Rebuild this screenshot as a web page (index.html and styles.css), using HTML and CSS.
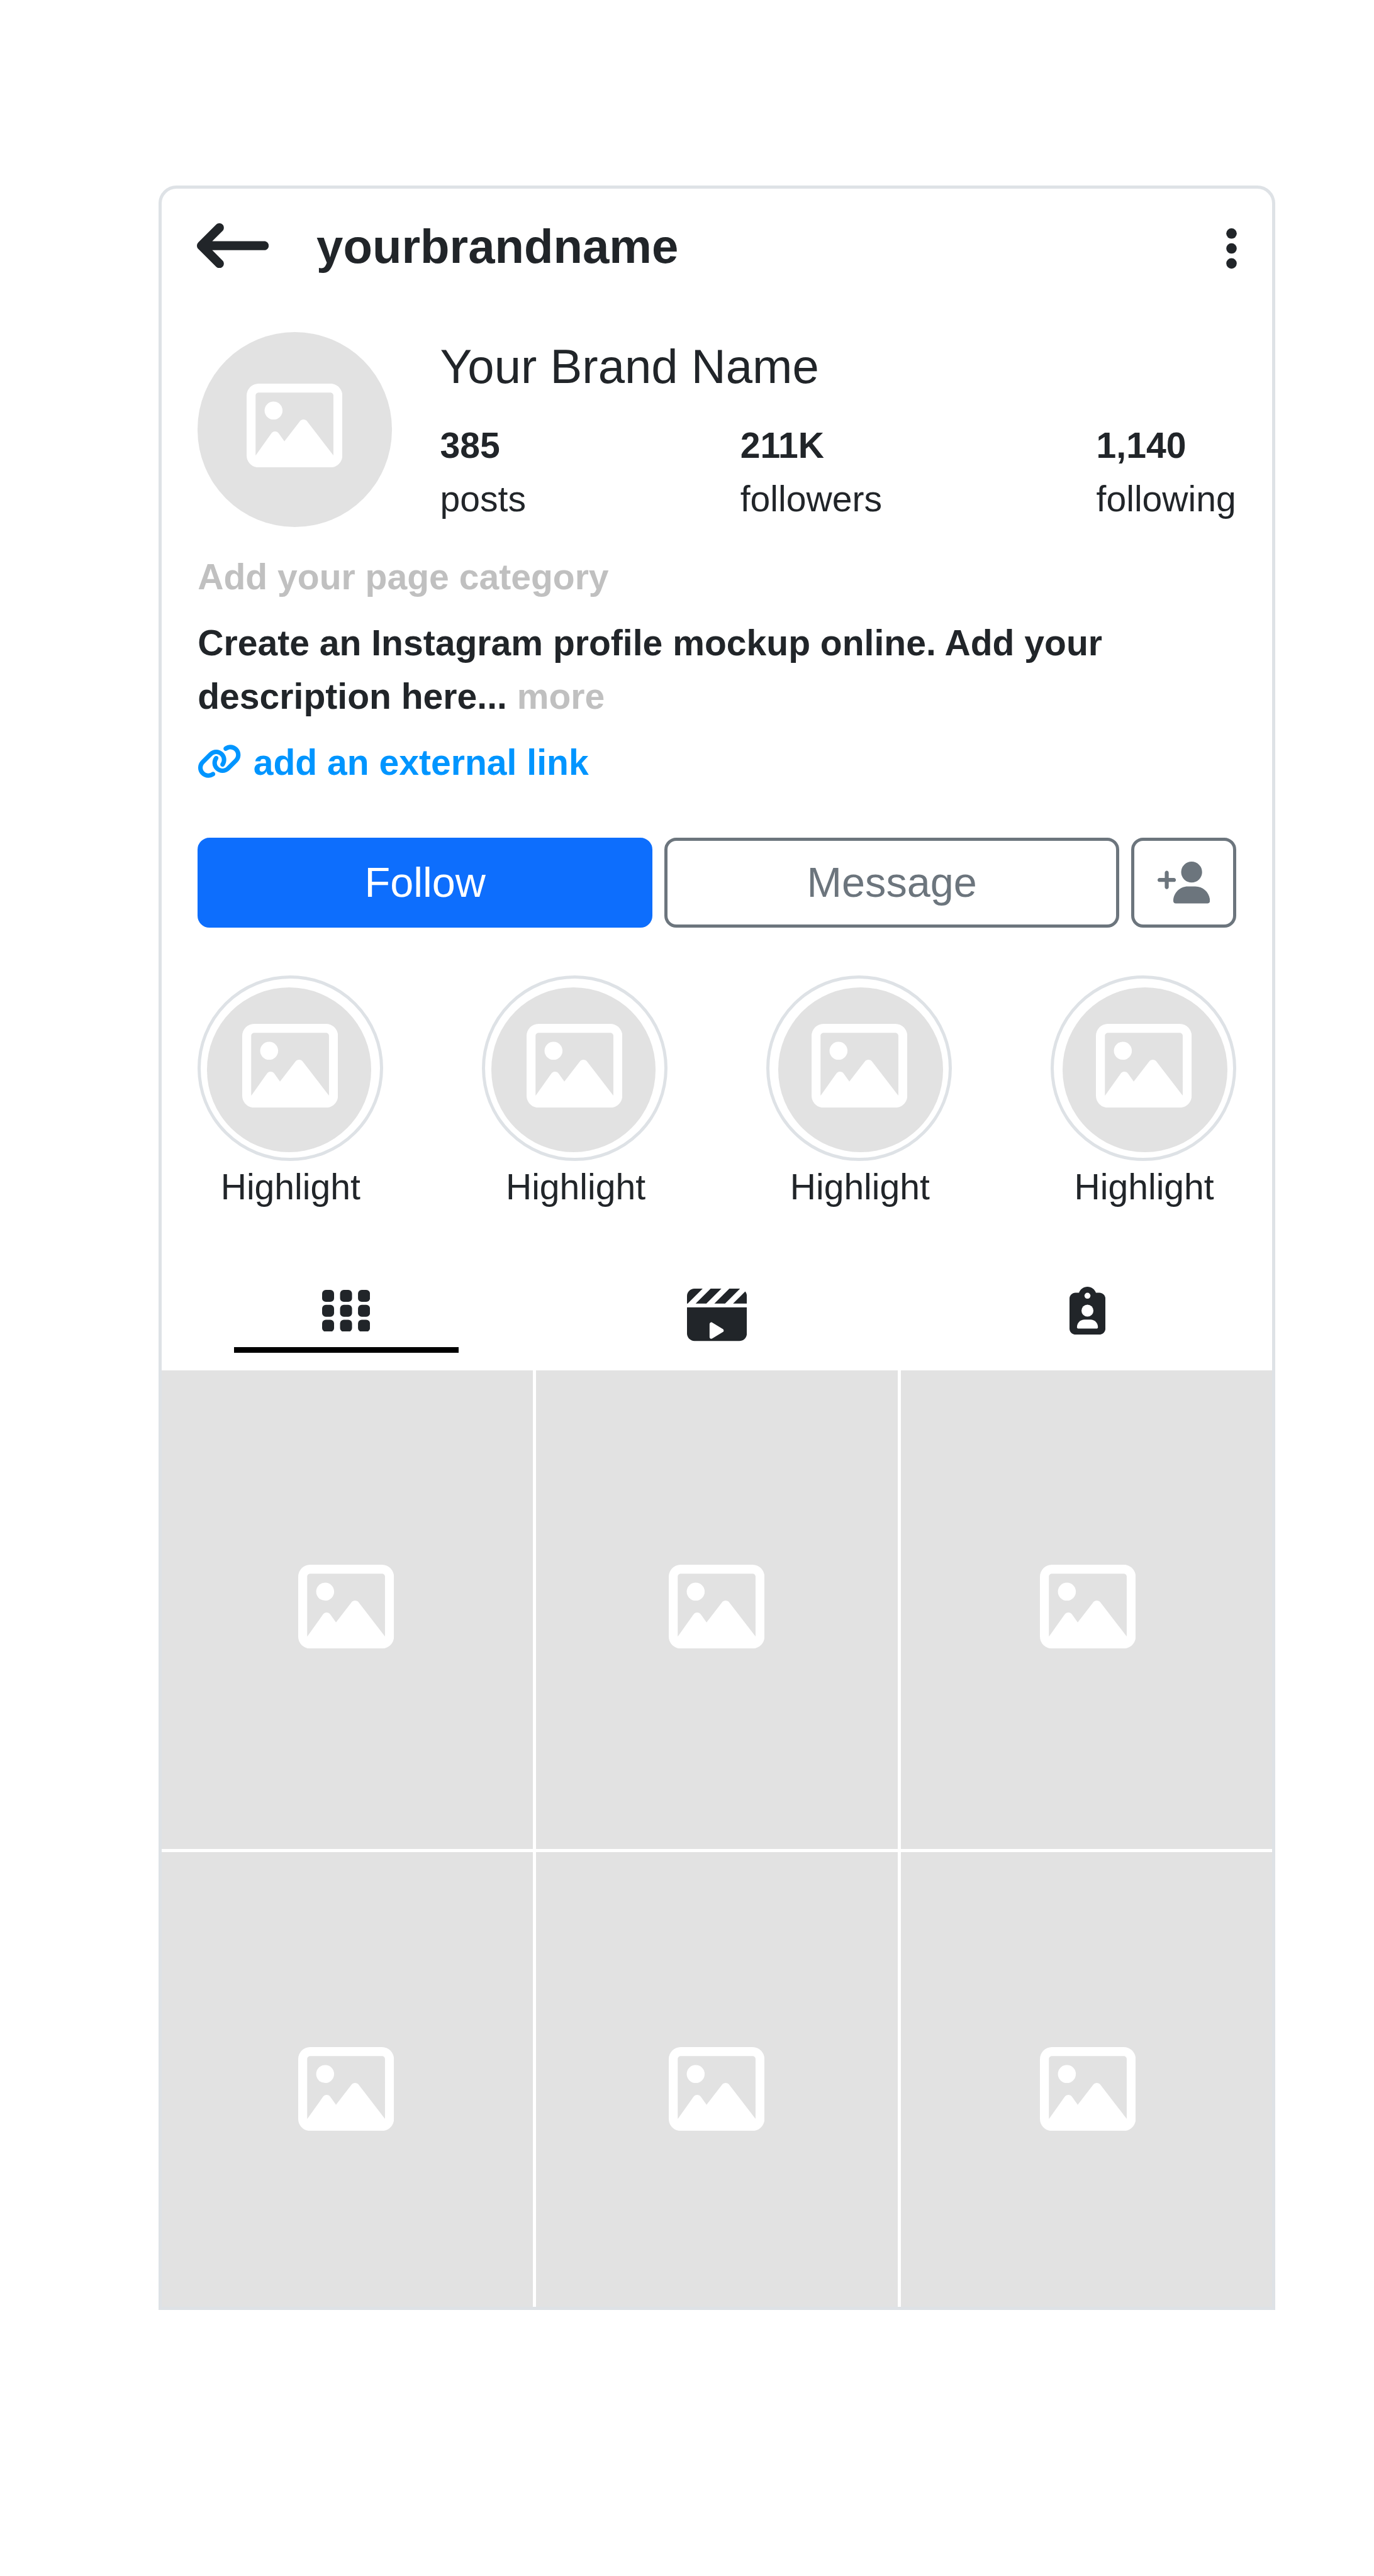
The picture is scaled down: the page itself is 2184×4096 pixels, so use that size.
FILE: index.html
```html
<!DOCTYPE html>
<html lang="en">
<head>
<meta charset="utf-8">
<title>yourbrandname</title>
<link rel="stylesheet" href="styles.css">
</head>
<body>
<svg class="sprite" aria-hidden="true">
  <symbol id="image" viewBox="0 32 512 448"><path d="M448 80c8.8 0 16 7.2 16 16V415.8l-5-6.5-136-176c-4.5-5.9-11.6-9.3-19-9.3s-14.4 3.4-19 9.3L202 340.7l-30.5-42.7C167 291.7 159.8 288 152 288s-15 3.7-19.5 10.1l-80 112L48 416.3l0-.3V96c0-8.8 7.2-16 16-16H448zM64 32C28.7 32 0 60.7 0 96V416c0 35.3 28.7 64 64 64H448c35.3 0 64-28.7 64-64V96c0-35.3-28.7-64-64-64H64zm80 192a48 48 0 1 0 0-96 48 48 0 1 0 0 96z"/></symbol>
</svg>
<main class="card">
  <header class="topbar">
    <svg class="back" viewBox="0 96 512 320"><path d="M9.4 233.4c-12.5 12.5-12.5 32.8 0 45.3l128 128c12.5 12.5 32.8 12.5 45.3 0s12.5-32.8 0-45.3L109.3 288 480 288c17.7 0 32-14.3 32-32s-14.3-32-32-32l-370.7 0 73.4-73.4c12.5-12.5 12.5-32.8 0-45.3s-32.8-12.5-45.3 0l-128 128z"/></svg>
    <h1 class="handle">yourbrandname</h1>
    <svg class="menu" viewBox="0 0 128 512"><circle cx="64" cy="96" r="56"/><circle cx="64" cy="256" r="56"/><circle cx="64" cy="416" r="56"/></svg>
  </header>

  <section class="profile">
    <div class="avatar"><svg class="image"><use href="#image"/></svg></div>
    <div class="summary">
      <div class="name">Your Brand Name</div>
      <div class="stats">
        <div><b>385</b><span>posts</span></div>
        <div><b>211K</b><span>followers</span></div>
        <div><b>1,140</b><span>following</span></div>
      </div>
    </div>
  </section>

  <section class="bio">
    <p class="muted">Add your page category</p>
    <p>Create an Instagram profile mockup online. Add your<br>description here... <span class="muted">more</span></p>
    <p class="link"><svg viewBox="0 0 640 512"><path d="M579.8 267.7c56.5-56.5 56.5-148 0-204.5c-50-50-128.8-56.5-186.3-15.4l-1.6 1.1c-14.4 10.3-17.7 30.3-7.4 44.6s30.3 17.7 44.6 7.4l1.6-1.1c32.1-22.9 76-19.3 103.8 8.6c31.5 31.5 31.5 82.5 0 114L422.3 334.8c-31.5 31.5-82.5 31.5-114 0c-27.9-27.9-31.5-71.8-8.6-103.8l1.1-1.6c10.3-14.4 6.9-34.4-7.4-44.6s-34.4-6.9-44.6 7.4l-1.1 1.6C206.5 251.2 213 330 263 380c56.5 56.5 148 56.5 204.5 0L579.8 267.7zM60.2 244.3c-56.5 56.5-56.5 148 0 204.5c50 50 128.8 56.5 186.3 15.4l1.6-1.1c14.4-10.3 17.7-30.3 7.4-44.6s-30.3-17.7-44.6-7.4l-1.6 1.1c-32.1 22.9-76 19.3-103.8-8.6C74 372 74 321 105.5 289.5L217.7 177.2c31.5-31.5 82.5-31.5 114 0c27.9 27.9 31.5 71.8 8.6 103.9l-1.1 1.6c-10.3 14.4-6.9 34.4 7.4 44.6s34.4 6.9 44.6-7.4l1.1-1.6C433.5 260.8 427 182 377 132c-56.5-56.5-148-56.5-204.5 0L60.2 244.3z"/></svg><span>add an external link</span></p>
  </section>

  <section class="actions">
    <button class="btn primary">Follow</button>
    <button class="btn">Message</button>
    <button class="btn add" aria-label="Add user"><svg viewBox="0 0 640 512"><path transform="matrix(-1 0 0 1 640 0)" d="M96 128a128 128 0 1 1 256 0A128 128 0 1 1 96 128zM0 482.3C0 383.8 79.8 304 178.3 304h91.4C368.2 304 448 383.8 448 482.3c0 16.4-13.3 29.7-29.7 29.7H29.7C13.3 512 0 498.7 0 482.3zM504 312V248H440c-13.3 0-24-10.7-24-24s10.7-24 24-24h64V136c0-13.3 10.7-24 24-24s24 10.7 24 24v64h64c13.3 0 24 10.7 24 24s-10.7 24-24 24H552v64c0 13.3-10.7 24-24 24s-24-10.7-24-24z"/></svg></button>
  </section>

  <section class="highlights">
    <div class="highlight"><div class="ring"><div class="cover"><svg class="image"><use href="#image"/></svg></div></div><span>Highlight</span></div>
    <div class="highlight"><div class="ring"><div class="cover"><svg class="image"><use href="#image"/></svg></div></div><span>Highlight</span></div>
    <div class="highlight"><div class="ring"><div class="cover"><svg class="image"><use href="#image"/></svg></div></div><span>Highlight</span></div>
    <div class="highlight"><div class="ring"><div class="cover"><svg class="image"><use href="#image"/></svg></div></div><span>Highlight</span></div>
  </section>

  <nav class="tabs">
    <div class="tab posts-tab"><svg viewBox="0 0 80 70"><rect width="20" height="20" rx="6.2"/><rect x="30" width="20" height="20" rx="6.2"/><rect x="60" width="20" height="20" rx="6.2"/><rect y="25" width="20" height="20" rx="6.2"/><rect x="30" y="25" width="20" height="20" rx="6.2"/><rect x="60" y="25" width="20" height="20" rx="6.2"/><rect y="50" width="20" height="20" rx="6.2"/><rect x="30" y="50" width="20" height="20" rx="6.2"/><rect x="60" y="50" width="20" height="20" rx="6.2"/></svg></div>
    <div class="tab reels-tab"><svg viewBox="0 32 512 448"><path d="M448 32H361.9l-1 1-127 127h92.1l1-1L453.8 32.3c-1.9-.2-3.8-.3-5.8-.3zm64 128V96c0-15.1-5.3-29.1-14-40l-104 104H512zM294.1 32H201.9l-1 1L73.9 160h92.1l1-1 127-127zM64 32C28.7 32 0 60.7 0 96v64H6.1l1-1 127-127H64zM512 192H0V416c0 35.3 28.7 64 64 64H448c35.3 0 64-28.7 64-64V192z"/><path fill="#fff" transform="translate(193 310) scale(.315)" d="M73 39c-14.8-9.1-33.4-9.4-48.5-.9S0 62.6 0 80V432c0 17.4 9.4 33.4 24.5 41.9s33.7 8.1 48.5-.9L361 297c14.3-8.7 23-24.2 23-41s-8.7-32.2-23-41L73 39z"/></svg></div>
    <div class="tab tagged-tab"><svg viewBox="0 0 384 512"><path d="M192 0c-41.8 0-77.4 26.7-90.5 64H64C28.7 64 0 92.7 0 128V448c0 35.3 28.7 64 64 64H320c35.3 0 64-28.7 64-64V128c0-35.3-28.7-64-64-64H282.5C269.4 26.7 233.8 0 192 0z"/><g fill="#fff"><circle cx="192" cy="96" r="32"/><circle cx="192" cy="256" r="64"/><path d="M80 432c0-44.2 35.8-80 80-80h64c44.2 0 80 35.8 80 80c0 8.8-7.2 16-16 16H96c-8.8 0-16-7.2-16-16z"/></g></svg></div>
  </nav>

  <section class="posts">
    <div class="post"><svg class="image"><use href="#image"/></svg></div>
    <div class="post"><svg class="image"><use href="#image"/></svg></div>
    <div class="post"><svg class="image"><use href="#image"/></svg></div>
    <div class="post"><svg class="image"><use href="#image"/></svg></div>
    <div class="post"><svg class="image"><use href="#image"/></svg></div>
    <div class="post"><svg class="image"><use href="#image"/></svg></div>
  </section>
</main>
</body>
</html>
```
FILE: styles.css
```css
:root {
  --u: 0.95155px; /* one layout unit */
  --ink: #212529;
  --gray: #6c757d;
  --line: #dee2e6;
  --fill: #e2e2e2;
}

* { box-sizing: border-box; }

body {
  margin: 0;
  background: #fff;
  color: var(--ink);
  font: calc(var(--u) * 60)/1.5 "Liberation Sans", Arial, sans-serif;
  min-height: 4096px;
  overflow: hidden;
}

h1, p { margin: 0; }
svg { display: block; flex: none; fill: currentColor; }
.sprite { display: none; }
.image { width: calc(var(--u) * 160); height: calc(var(--u) * 140); color: #fff; }

.card {
  display: flex;
  flex-direction: column;
  width: calc(var(--u) * 1865);
  height: calc(var(--u) * 3550);
  margin: calc(var(--u) * 310) 0 0 calc(var(--u) * 265);
  border: 5px solid var(--line);
  border-radius: calc(var(--u) * 30) calc(var(--u) * 30) 0 0;
}

.topbar, .profile, .bio, .actions, .highlights {
  margin-left: calc(var(--u) * 60);
  margin-right: calc(var(--u) * 60);
}

/* Top bar */
.topbar {
  display: flex;
  height: calc(var(--u) * 120);
  margin-top: calc(var(--u) * 37.3);
}
.back {
  width: calc(var(--u) * 120);
  height: calc(var(--u) * 75);
  margin: calc(var(--u) * 20.2) calc(var(--u) * 79.5) 0 calc(var(--u) * -1);
}
.handle { flex: 1; font-size: calc(var(--u) * 80); line-height: 1.5; }
.menu {
  width: calc(var(--u) * 20);
  height: calc(var(--u) * 80);
  margin: calc(var(--u) * 22.7) calc(var(--u) * -2) 0 0;
}

/* Profile summary */
.profile {
  display: flex;
  gap: calc(var(--u) * 80);
  height: calc(var(--u) * 325);
  margin-top: calc(var(--u) * 82.7);
}
.avatar {
  display: flex;
  justify-content: center;
  width: calc(var(--u) * 325);
  height: calc(var(--u) * 325);
  padding: calc(var(--u) * 85.5) calc(var(--u) * 2) 0 0;
  border-radius: 50%;
  background: var(--fill);
}
.summary { flex: 1; margin-top: calc(var(--u) * -2.7); }
.name { font-size: calc(var(--u) * 80); line-height: 1.5; }
.stats {
  display: flex;
  justify-content: space-between;
  margin-top: calc(var(--u) * 26.9);
}
.stats b, .stats span { display: block; }

/* Bio */
.bio {
  display: flex;
  flex-direction: column;
  gap: calc(var(--u) * 20);
  margin-top: calc(var(--u) * 39.2);
  font-weight: 700;
  white-space: nowrap;
}
.muted { color: #c0c0c0; }
.link { display: flex; color: #0095ff; }
.link svg {
  width: calc(var(--u) * 75);
  height: calc(var(--u) * 60);
  margin: calc(var(--u) * 13.1) calc(var(--u) * 19) 0 calc(var(--u) * -1);
}

/* Buttons */
.actions {
  display: flex;
  gap: calc(var(--u) * 20);
  margin-top: calc(var(--u) * 80.8);
}
.btn {
  display: flex;
  flex: 1;
  align-items: center;
  justify-content: center;
  height: calc(var(--u) * 150);
  padding: 0;
  border: 5px solid var(--gray);
  border-radius: calc(var(--u) * 20);
  background: #fff;
  color: var(--gray);
  font: calc(var(--u) * 70)/1.5 "Liberation Sans", Arial, sans-serif;
}
.primary { border-color: #0d6efd; background: #0d6efd; color: #fff; }
.add { flex: 0 0 calc(var(--u) * 175); }
.add svg { width: calc(var(--u) * 87.5); height: calc(var(--u) * 70); }

/* Story highlights */
.highlights {
  display: flex;
  justify-content: space-between;
  margin-top: calc(var(--u) * 80);
}
.highlight { width: calc(var(--u) * 310); text-align: center; }
.ring {
  height: calc(var(--u) * 310);
  padding: calc(var(--u) * 15) calc(var(--u) * 10);
  border: 5px solid var(--line);
  border-radius: 50%;
}
.cover {
  display: flex;
  justify-content: center;
  width: calc(var(--u) * 275);
  height: calc(var(--u) * 275);
  padding-top: calc(var(--u) * 60.5);
  border-radius: 50%;
  background: var(--fill);
}
.highlight:nth-child(n+3) .ring { padding-left: calc(var(--u) * 15); }
.highlight:nth-child(n+3) .cover { padding-right: calc(var(--u) * 3); }
.highlight:nth-child(-n+2) .cover { padding-left: calc(var(--u) * 3); }
.highlight span { display: block; margin-top: calc(var(--u) * -0.8); }
.highlight:nth-child(n+2) span { padding-left: calc(var(--u) * 3); }

/* Tabs */
.tabs {
  display: grid;
  grid-template-columns: repeat(3, 1fr);
  flex: none;
  height: calc(var(--u) * 140);
  margin: calc(var(--u) * 120.8) calc(var(--u) * -1.5) 0;
}
.tab { display: flex; justify-content: center; }
.posts-tab {
  justify-self: center;
  width: calc(var(--u) * 375);
  height: calc(var(--u) * 110);
  padding-top: calc(var(--u) * 5);
  border-bottom: calc(var(--u) * 10) solid #000;
}
.posts-tab svg { width: calc(var(--u) * 80); height: calc(var(--u) * 70); }
.reels-tab { padding-top: calc(var(--u) * 3.7); }
.reels-tab svg { width: calc(var(--u) * 100); height: calc(var(--u) * 87.5); }
.tagged-tab svg { width: calc(var(--u) * 60); height: calc(var(--u) * 80); }

/* Post grid */
.posts {
  display: grid;
  flex: 1;
  grid-template-columns: 620fr 605fr 620fr;
  grid-template-rows: calc(var(--u) * 800) 1fr;
  gap: 5px;
}
.post {
  display: flex;
  justify-content: center;
  padding-top: calc(var(--u) * 325);
  background: var(--fill);
}
.post:nth-child(3n+1) { padding-right: calc(var(--u) * 3); }
.post:nth-child(3n) { padding-left: calc(var(--u) * 4); }
```
